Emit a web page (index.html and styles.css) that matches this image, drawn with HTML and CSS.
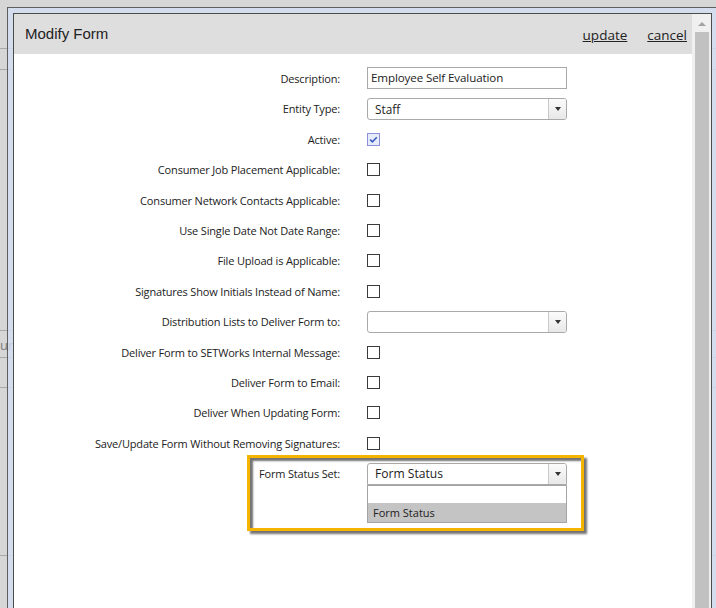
FILE: index.html
```html
<!DOCTYPE html>
<html>
<head>
<meta charset="utf-8">
<link rel="stylesheet" href="styles.css">
</head>
<body>
<div class="backdrop">
  <div class="bg-line l1"></div>
  <div class="bg-line l2"></div>
  <div class="bg-line l3"></div>
  <div class="bg-line l4"></div>
  <div class="bg-line l5"></div>
  <div class="bg-line l6"></div>
  <div class="bg-text">um</div>
</div>
<div class="dialog">
  <div class="inner">
    <div class="main">
      <div class="header">
        <h1 class="title">Modify Form</h1>
        <div class="actions">
          <a class="action" href="#">update</a>
          <a class="action" href="#">cancel</a>
        </div>
      </div>
      <div class="form">
        <div class="label">Description:</div>
        <div class="control"><div class="textbox">Employee Self Evaluation</div></div>

        <div class="label">Entity Type:</div>
        <div class="control"><div class="select"><span class="select-text">Staff</span><span class="select-btn"><span class="caret"></span></span></div></div>

        <div class="label">Active:</div>
        <div class="control"><span class="checkbox checked"><svg width="11" height="11" viewBox="0 0 11 11"><path d="M2.2 5.6 L4.4 7.8 L8.8 3.2" fill="none" stroke="#3d5bbd" stroke-width="1.6"/></svg></span></div>

        <div class="label">Consumer Job Placement Applicable:</div>
        <div class="control"><span class="checkbox"></span></div>

        <div class="label">Consumer Network Contacts Applicable:</div>
        <div class="control"><span class="checkbox"></span></div>

        <div class="label">Use Single Date Not Date Range:</div>
        <div class="control"><span class="checkbox"></span></div>

        <div class="label">File Upload is Applicable:</div>
        <div class="control"><span class="checkbox"></span></div>

        <div class="label">Signatures Show Initials Instead of Name:</div>
        <div class="control"><span class="checkbox"></span></div>

        <div class="label">Distribution Lists to Deliver Form to:</div>
        <div class="control"><div class="select"><span class="select-text"></span><span class="select-btn"><span class="caret"></span></span></div></div>

        <div class="label">Deliver Form to SETWorks Internal Message:</div>
        <div class="control"><span class="checkbox"></span></div>

        <div class="label">Deliver Form to Email:</div>
        <div class="control"><span class="checkbox"></span></div>

        <div class="label">Deliver When Updating Form:</div>
        <div class="control"><span class="checkbox"></span></div>

        <div class="label">Save/Update Form Without Removing Signatures:</div>
        <div class="control"><span class="checkbox"></span></div>

        <div class="label">Form Status Set:</div>
        <div class="control">
          <div class="select open">
            <span class="select-text big">Form Status</span><span class="select-btn"><span class="caret"></span></span>
            <div class="listbox">
              <div class="option empty"></div>
              <div class="option selected">Form Status</div>
            </div>
            <div class="highlight"></div>
          </div>
        </div>
      </div>
    </div>
    <div class="scrollbar">
      <div class="scroll-up"></div>
      <div class="scroll-thumb"></div>
    </div>
  </div>
</div>
</body>
</html>
```

FILE: styles.css
```css
* { box-sizing: border-box; }
html, body {
  margin: 0;
  padding: 0;
  width: 716px;
  height: 608px;
  overflow: hidden;
  background: #d6d6d6;
  font-family: "Open Sans", "Liberation Sans", sans-serif;
}

.backdrop {
  position: absolute;
  inset: 0;
}
.bg-line {
  position: absolute;
  left: 0;
  right: 0;
  height: 1px;
  background: #a9a9a9;
}
.l1 { top: 48px; }
.l2 { top: 69px; }
.l3 { top: 330px; }
.l4 { top: 357px; }
.l5 { top: 387px; }
.l6 { top: 555px; }
.bg-text {
  position: absolute;
  left: 0;
  top: 336px;
  font-size: 13px;
  color: #7a7a7a;
}

.dialog {
  position: absolute;
  left: 7px;
  top: 7px;
  width: 711px;
  height: 640px;
  border: 1px solid #5e5e5e;
  padding: 5px;
  background: rgba(210, 222, 242, 0.82);
}
.inner {
  display: flex;
  height: 100%;
  border: 1px solid #4c4c4c;
  background: #fff;
}
.main {
  width: 678px;
  display: flex;
  flex-direction: column;
}
.header {
  height: 40px;
  background: #dedede;
  display: flex;
  align-items: center;
  justify-content: space-between;
  padding: 0 5px 0 11px;
}
.title {
  margin: 0;
  font-family: "Liberation Sans", Arial, sans-serif;
  font-weight: normal;
  font-size: 15px;
  color: #222;
  line-height: 40px;
}
.actions {
  display: flex;
  gap: 20px;
  padding-top: 2px;
}
.action {
  color: #222;
  font-size: 13.5px;
  text-decoration: underline;
}

.form {
  display: grid;
  grid-template-columns: 326px 200px;
  column-gap: 27px;
  grid-auto-rows: 30.4px;
  align-items: center;
  padding-top: 9.3px;
}
.label {
  text-align: right;
  font-size: 11px;
  letter-spacing: -0.17px;
  color: #222;
  white-space: nowrap;
}
.control {
  display: flex;
  align-items: center;
}
.textbox {
  width: 200px;
  height: 22px;
  border: 1px solid #a9a9a9;
  padding-left: 3px;
  font-size: 11.6px;
  letter-spacing: -0.12px;
  line-height: 20px;
  color: #222;
}
.select {
  position: relative;
  width: 200px;
  height: 22px;
  border: 1px solid #a9a9a9;
  border-radius: 3px;
  display: flex;
  align-items: center;
}
.select.open { border-radius: 3px 3px 0 0; }
.select-text {
  flex: 1;
  padding-left: 7px;
  font-size: 11.8px;
  color: #222;
}
.select-text.big { font-size: 12.1px; }
.select-btn {
  width: 18px;
  height: 100%;
  border-left: 1px solid #c8c8c8;
  background: linear-gradient(#fbfbfb, #e8e8e8);
  border-radius: 0 2px 2px 0;
  display: flex;
  align-items: center;
  justify-content: center;
}
.caret {
  width: 0;
  height: 0;
  border-left: 3.5px solid transparent;
  border-right: 3.5px solid transparent;
  border-top: 4px solid #333;
  margin-top: 1px;
}
.checkbox {
  width: 13px;
  height: 13px;
  border: 1px solid #3a3a3a;
  background: #fff;
  display: flex;
  align-items: center;
  justify-content: center;
}
.checkbox.checked {
  border-color: #8d90d8;
  background: #e6ecf9;
}

.listbox {
  position: absolute;
  left: -1px;
  top: 21px;
  width: 200px;
  border: 1px solid #a4a4a4;
  background: #fff;
}
.option {
  font-size: 11px;
  color: #222;
  padding-left: 5px;
}
.option.empty { height: 17px; }
.option.selected {
  height: 19px;
  line-height: 19px;
  background: #c4c4c4;
}
.highlight {
  position: absolute;
  left: -121px;
  top: -9px;
  width: 337px;
  height: 76px;
  border: 3px solid #f4b400;
  box-shadow: 3px 3px 2px rgba(0, 0, 0, 0.55), inset 3px 3px 2px rgba(0, 0, 0, 0.55);
  pointer-events: none;
}

.scrollbar {
  width: 19px;
  background: #f0f0f0;
  display: flex;
  flex-direction: column;
  align-items: center;
  padding-top: 8px;
}
.scroll-up {
  width: 0;
  height: 0;
  border-left: 4px solid transparent;
  border-right: 4px solid transparent;
  border-bottom: 4px solid #a3a3a3;
}
.scroll-thumb {
  margin-top: 6px;
  width: 14px;
  flex: 1;
  background: #c1c1c1;
}
```
